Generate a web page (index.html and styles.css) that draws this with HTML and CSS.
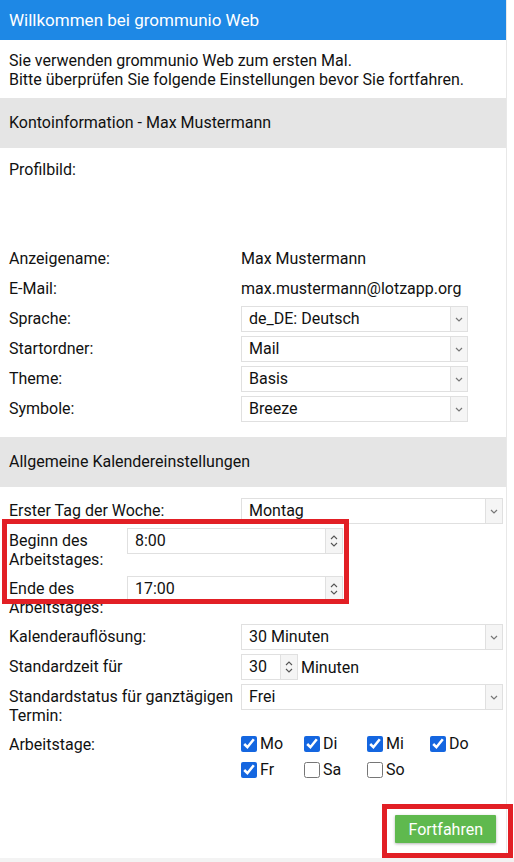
FILE: index.html
```html
<!DOCTYPE html>
<html lang="de">
<head>
    <meta charset="UTF-8">
    <meta name="viewport" content="width=device-width, initial-scale=1.0">
    <title>Willkommen bei grommunio Web</title>
    <link rel="stylesheet" href="styles.css">
</head>
<body>
    <div class="dialog">
        <header class="titlebar">Willkommen bei grommunio Web</header>
        <p class="intro">Sie verwenden grommunio Web zum ersten Mal.<br>Bitte überprüfen Sie folgende Einstellungen bevor Sie fortfahren.</p>

        <h2 class="section-title">Kontoinformation - Max Mustermann</h2>
        <div class="form account">
            <div class="row profile">
                <div class="label">Profilbild:</div>
            </div>
            <div class="row">
                <div class="label">Anzeigename:</div>
                <div class="value">Max Mustermann</div>
            </div>
            <div class="row">
                <div class="label">E-Mail:</div>
                <div class="value">max.mustermann@lotzapp.org</div>
            </div>
            <div class="row">
                <div class="label">Sprache:</div>
                <div class="field select"><span class="text">de_DE: Deutsch</span><span class="btn"><svg width="8" height="5" viewBox="0 0 8 5"><polyline points="1,1 4,4 7,1" fill="none" stroke="#777" stroke-width="1.2"/></svg></span></div>
            </div>
            <div class="row">
                <div class="label">Startordner:</div>
                <div class="field select"><span class="text">Mail</span><span class="btn"><svg width="8" height="5" viewBox="0 0 8 5"><polyline points="1,1 4,4 7,1" fill="none" stroke="#777" stroke-width="1.2"/></svg></span></div>
            </div>
            <div class="row">
                <div class="label">Theme:</div>
                <div class="field select"><span class="text">Basis</span><span class="btn"><svg width="8" height="5" viewBox="0 0 8 5"><polyline points="1,1 4,4 7,1" fill="none" stroke="#777" stroke-width="1.2"/></svg></span></div>
            </div>
            <div class="row">
                <div class="label">Symbole:</div>
                <div class="field select"><span class="text">Breeze</span><span class="btn"><svg width="8" height="5" viewBox="0 0 8 5"><polyline points="1,1 4,4 7,1" fill="none" stroke="#777" stroke-width="1.2"/></svg></span></div>
            </div>
        </div>

        <h2 class="section-title">Allgemeine Kalendereinstellungen</h2>
        <div class="form calendar">
            <div class="row">
                <div class="label">Erster Tag der Woche:</div>
                <div class="field select"><span class="text">Montag</span><span class="btn"><svg width="8" height="5" viewBox="0 0 8 5"><polyline points="1,1 4,4 7,1" fill="none" stroke="#777" stroke-width="1.2"/></svg></span></div>
            </div>
            <div class="row hours">
                <div class="label">Beginn des Arbeitstages:</div>
                <div class="field spinner"><span class="text">8:00</span><span class="btn"><svg width="8" height="14" viewBox="0 0 8 14"><polyline points="1,5 4,2 7,5" fill="none" stroke="#555" stroke-width="1.1"/><polyline points="1,9 4,12 7,9" fill="none" stroke="#555" stroke-width="1.1"/></svg></span></div>
            </div>
            <div class="row hours">
                <div class="label">Ende des Arbeitstages:</div>
                <div class="field spinner"><span class="text">17:00</span><span class="btn"><svg width="8" height="14" viewBox="0 0 8 14"><polyline points="1,5 4,2 7,5" fill="none" stroke="#555" stroke-width="1.1"/><polyline points="1,9 4,12 7,9" fill="none" stroke="#555" stroke-width="1.1"/></svg></span></div>
            </div>
            <div class="row">
                <div class="label">Kalenderauflösung:</div>
                <div class="field select"><span class="text">30 Minuten</span><span class="btn"><svg width="8" height="5" viewBox="0 0 8 5"><polyline points="1,1 4,4 7,1" fill="none" stroke="#777" stroke-width="1.2"/></svg></span></div>
            </div>
            <div class="row">
                <div class="label">Standardzeit für</div>
                <div class="inline">
                    <div class="field spinner small"><span class="text">30</span><span class="btn"><svg width="8" height="14" viewBox="0 0 8 14"><polyline points="1,5 4,2 7,5" fill="none" stroke="#555" stroke-width="1.1"/><polyline points="1,9 4,12 7,9" fill="none" stroke="#555" stroke-width="1.1"/></svg></span></div>
                    <span class="unit">Minuten</span>
                </div>
            </div>
            <div class="row">
                <div class="label">Standardstatus für ganztägigen Termin:</div>
                <div class="field select"><span class="text">Frei</span><span class="btn"><svg width="8" height="5" viewBox="0 0 8 5"><polyline points="1,1 4,4 7,1" fill="none" stroke="#777" stroke-width="1.2"/></svg></span></div>
            </div>
            <div class="row">
                <div class="label">Arbeitstage:</div>
                <div class="days">
                    <label class="day"><input type="checkbox" checked>Mo</label>
                    <label class="day"><input type="checkbox" checked>Di</label>
                    <label class="day"><input type="checkbox" checked>Mi</label>
                    <label class="day"><input type="checkbox" checked>Do</label>
                    <label class="day"><input type="checkbox" checked>Fr</label>
                    <label class="day"><input type="checkbox">Sa</label>
                    <label class="day"><input type="checkbox">So</label>
                </div>
            </div>
        </div>

        <div class="actions">
            <button class="button-continue">Fortfahren</button>
        </div>
    </div>
    <div class="footer"></div>

    <div class="mark mark-hours"></div>
    <div class="mark mark-continue"></div>
</body>
</html>
```

FILE: styles.css
```css
:root {
    --blue: #1e88e5;
    --band: #e5e5e5;
    --border: #e0e0e0;
    --green: #5fb94e;
    --mark: #e21f25;
}

* {
    margin: 0;
    padding: 0;
    box-sizing: border-box;
    font-family: Roboto, "Liberation Sans", Arial, sans-serif;
}

body {
    background: #ffffff;
    color: #111111;
    font-size: 16px;
    line-height: 19px;
    position: relative;
}

.dialog {
    width: 507px;
    border-right: 1px solid #e8e8e8;
    background: #ffffff;
}

.titlebar {
    background: var(--blue);
    color: #ffffff;
    height: 40px;
    line-height: 40px;
    padding-left: 9px;
    font-size: 17px;
}

.intro {
    padding: 11px 9px 9px;
}

.section-title {
    background: var(--band);
    height: 50px;
    line-height: 50px;
    padding-left: 9px;
    font-size: 16px;
    font-weight: normal;
}

.form {
    display: flex;
    flex-direction: column;
    gap: 4px;
    padding-left: 9px;
}

.account {
    padding-top: 9px;
    padding-bottom: 15px;
}

.calendar {
    padding-top: 11px;
    padding-right: 3px;
}

.row {
    display: grid;
    grid-template-columns: 232px 1fr;
    min-height: 26px;
}

.row.profile {
    height: 85px;
}

.row.hours {
    grid-template-columns: 118px 216px;
    min-height: 44px;
}

.label {
    padding: 3px 0;
}

.value {
    line-height: 26px;
}

.account .field {
    width: 227px;
}

.field {
    height: 26px;
    border: 1px solid var(--border);
    display: flex;
    background: #ffffff;
}

.field .text {
    flex: 1;
    padding-left: 7px;
    line-height: 24px;
}

.field .btn {
    width: 17px;
    border-left: 1px solid var(--border);
    background: #f5f5f5;
    display: flex;
    align-items: center;
    justify-content: center;
}

.inline {
    display: flex;
    align-items: center;
    gap: 3px;
}

.field.small {
    width: 57px;
}

.days {
    display: grid;
    grid-template-columns: repeat(4, 63px);
    row-gap: 10px;
    padding-top: 4px;
}

.day {
    display: flex;
    align-items: center;
    gap: 3px;
    line-height: 16px;
}

.day input {
    width: 16px;
    height: 16px;
    margin: 0;
    accent-color: #1466e0;
}

.actions {
    display: flex;
    justify-content: flex-end;
    padding: 37px 10px 15px 0;
}

.button-continue {
    background: var(--green);
    color: #ffffff;
    border: none;
    height: 28px;
    padding: 0 13px;
    font-size: 16px;
    border-radius: 1px;
    box-shadow: 0 1px 3px rgba(0,0,0,0.3);
    cursor: pointer;
}

.footer {
    height: 6px;
    background: #f3f3f3;
}

/* annotation frames */
.mark {
    position: absolute;
    border: 5px solid var(--mark);
}

.mark-hours {
    left: 2px;
    top: 519px;
    width: 347px;
    height: 85px;
}

.mark-continue {
    left: 382px;
    top: 804px;
    width: 131px;
    height: 54px;
}
```
